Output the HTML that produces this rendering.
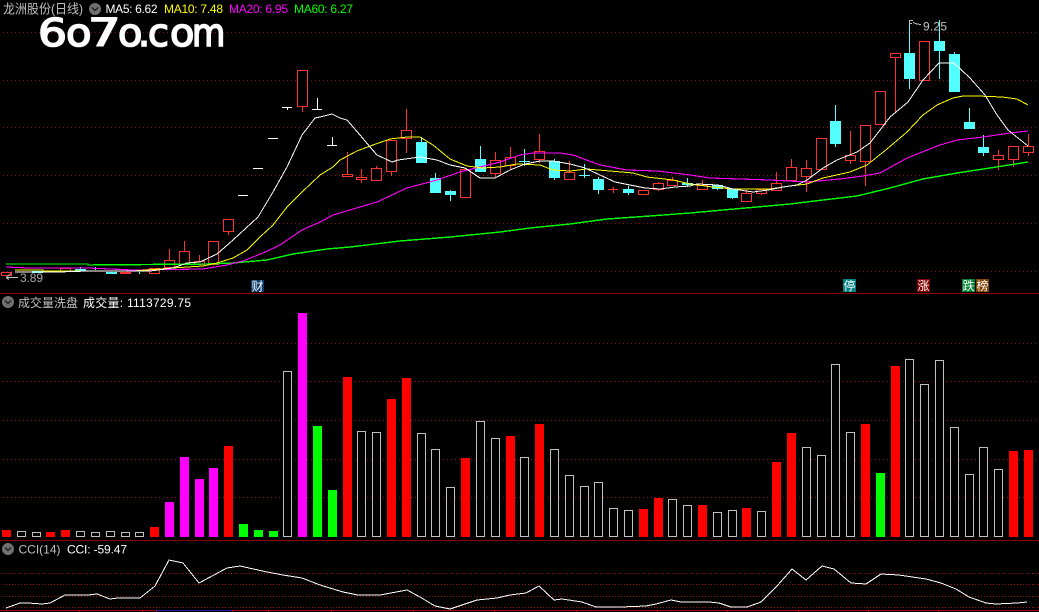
<!DOCTYPE html>
<html><head><meta charset="utf-8"><title>龙洲股份</title>
<style>
html,body{margin:0;padding:0;background:#000;width:1039px;height:612px;overflow:hidden}
svg{display:block;position:absolute;left:0;top:0}
text{font-family:"Liberation Sans","Noto Sans CJK SC",sans-serif;font-size:12px}
.lg{font-family:"DejaVu Sans",sans-serif;font-size:38px;fill:#fff;stroke:#fff;stroke-width:1.6px}
</style></head><body>
<svg width="1039" height="612" viewBox="0 0 1039 612" xmlns="http://www.w3.org/2000/svg">
<rect width="1039" height="612" fill="#000"/>
<!-- grid -->
<g stroke="#8a0f0f" stroke-width="1" stroke-dasharray="1 3" shape-rendering="crispEdges">
<path d="M3 32.5H1039M3 80.5H1039M3 127.5H1039M3 175.5H1039M3 223.5H1039M3 271.5H1039"/>
<path d="M3 343.5H1039M3 381.5H1039M3 420.5H1039M3 459.5H1039M3 497.5H1039"/>
</g>
<g stroke="#a00c0c" stroke-width="1" stroke-dasharray="1 2" shape-rendering="crispEdges">
<path d="M3 573.5H1039M3 584.5H1039M3 596.5H1039M3 607.5H1039"/>
</g>
<!-- dividers -->
<g shape-rendering="crispEdges" fill="none">
<path d="M0 293.5H1039M0 540.5H1039" stroke="#900000"/>
<path d="M0 610.5H1039" stroke="#b00010"/>
<path d="M156 610.5H232" stroke="#2020a0"/>
<path d="M79.5 611V612M142.5 611V612M156.5 611V612M232.5 611V612M268.5 611V612M331.5 611V612M413.5 611V612M494.5 611V612M576.5 611V612M657.5 611V612M727.5 611V612M798.5 611V612M868.5 611V612M938.5 611V612" stroke="#b00010"/>
</g>
<!-- candles -->
<g shape-rendering="crispEdges">
<g stroke="#54ffff" fill="none">
<path d="M80.5 267V271M95.5 267V270M139.5 272V274M435.5 173V193M450.5 190V201M480.5 146V172M524.5 149V166M519 161.5H530M554.5 159V180M584.5 164V178M579 175.5H590M598.5 177V194M628.5 186V195M687.5 178V187M717.5 185V190M732.5 189V199M835.5 105V147M909.5 20V89M939.5 20V79M954.5 52V60M969.5 108V125M983.5 135V156M421.5 137V150"/>
</g>
<g fill="#54ffff">
<rect x="32" y="271" width="11" height="2"/><rect x="75" y="269" width="11" height="2"/><rect x="106" y="272" width="11" height="2"/>
<rect x="416" y="142" width="11" height="21"/><rect x="430" y="178" width="11" height="15"/><rect x="445" y="191" width="11" height="4"/>
<rect x="475" y="159" width="11" height="13"/><rect x="549" y="161" width="11" height="17"/><rect x="593" y="179" width="11" height="11"/>
<rect x="623" y="189" width="11" height="4"/><rect x="682" y="183" width="11" height="2"/><rect x="712" y="185" width="11" height="4"/>
<rect x="727" y="189" width="11" height="9"/><rect x="830" y="121" width="11" height="23"/><rect x="904" y="53" width="11" height="26"/>
<rect x="934" y="41" width="11" height="10"/><rect x="949" y="54" width="11" height="38"/><rect x="964" y="122" width="11" height="7"/>
<rect x="978" y="147" width="11" height="6"/>
</g>
<path d="M238 195.5H248M253 168.5H263M268 138.5H278M282 107.5H292M287.5 107V110M312 109.5H322M317.5 98V109M327 145.5H337M332.5 137V145" stroke="#fff" fill="none"/>
<g stroke="#ff3232" fill="none">
<path d="M169.5 249V260M184.5 241V251M199.5 255V261M228.5 231V235M302.5 106V112M347.5 152V174M361.5 169V183M376.5 166V168M391.5 171V176M406.5 109V153M465.5 197V198M495.5 152V178M510.5 147V170M539.5 134V163M569.5 161V172M613.5 187V193M608 189.5H618M643.5 194V195M658.5 182V191M672.5 177V186M702.5 180V185M746.5 190V193M761.5 193V195M776.5 172V183M791.5 159V167M806.5 160V192M850.5 131V164M865.5 161V186M895.5 57V113M998.5 150V170M1013.5 159V167M1028.5 134V156"/>
</g>
<g stroke="#ff3232" fill="#000">
<rect x="1.5" y="272.5" width="10" height="3"/><rect x="60.5" y="268.5" width="10" height="3"/><rect x="120.5" y="272.5" width="10" height="1"/><rect x="149.5" y="268.5" width="10" height="5"/>
<rect x="164.5" y="260.5" width="10" height="7"/><rect x="179.5" y="251.5" width="10" height="13"/><rect x="194.5" y="261.5" width="10" height="3"/>
<rect x="208.5" y="241.5" width="10" height="23"/><rect x="223.5" y="219.5" width="10" height="12"/><rect x="297.5" y="70.5" width="10" height="36"/>
<rect x="342.5" y="174.5" width="10" height="2"/><rect x="356.5" y="177.5" width="10" height="2"/><rect x="371.5" y="168.5" width="10" height="12"/>
<rect x="386.5" y="140.5" width="10" height="31"/><rect x="401.5" y="130.5" width="10" height="8"/><rect x="460.5" y="169.5" width="10" height="28"/>
<rect x="490.5" y="160.5" width="10" height="13"/><rect x="505.5" y="157.5" width="10" height="8"/><rect x="534.5" y="151.5" width="10" height="8"/>
<rect x="564.5" y="172.5" width="10" height="7"/><rect x="638.5" y="190.5" width="10" height="4"/><rect x="653.5" y="183.5" width="10" height="6"/>
<rect x="667.5" y="180.5" width="10" height="5"/><rect x="697.5" y="185.5" width="10" height="4"/><rect x="741.5" y="193.5" width="10" height="8"/>
<rect x="756.5" y="189.5" width="10" height="4"/><rect x="771.5" y="183.5" width="10" height="7"/><rect x="786.5" y="167.5" width="10" height="13"/>
<rect x="801.5" y="168.5" width="10" height="8"/><rect x="816.5" y="138.5" width="10" height="31"/><rect x="845.5" y="155.5" width="10" height="5"/>
<rect x="860.5" y="125.5" width="10" height="36"/><rect x="875.5" y="91.5" width="10" height="33"/><rect x="890.5" y="53.5" width="10" height="4"/>
<rect x="919.5" y="41.5" width="10" height="39"/><rect x="993.5" y="155.5" width="10" height="4"/><rect x="1008.5" y="146.5" width="10" height="13"/>
<rect x="1023.5" y="146.5" width="10" height="6"/>
</g>
</g>
<!-- moving averages -->
<g fill="none" shape-rendering="crispEdges">
<polyline stroke="#00ff00" stroke-width="1.4" points="6,264 88,264 88,265 207,264 233,263 267,260 293,254 327,249 350,247 400,241 450,237 500,232 530,228 570,224 607,219 650,216 690,213 723,210 757,207 790,204 823,200 857,196 890,188 923,179 957,173 990,168 1028,162"/>
<polyline stroke="#ff00ff" stroke-width="1.1" points="6,267 28,268 88,268 133,270 203,269 227,265 243,261 263,253 280,245 302,230 320,222 333,215 350,210 360,207 377,202 407,188 437,180 460,172 480,167 500,162 520,155 533,153 560,153 573,155 600,165 627,170 657,171 690,175 710,178 740,179 770,180 807,182 840,179 863,176 880,173 907,158 940,145 957,140 983,137 1010,133 1028,131"/>
<polyline stroke="#ffff00" stroke-width="1" points="15,270 43,270 43,271 133,271 173,268 187,267 203,266 217,263 233,258 247,250 260,237 273,225 287,207 302,192 320,175 333,167 340,160 357,151 373,145 390,139 407,137 420,137 433,145 450,159 467,166 483,168 500,167 517,164 540,165 553,170 570,171 587,169 610,171 633,173 647,177 673,180 690,184 713,187 733,189 770,189 790,186 807,184 823,178 850,172 867,165 887,149 907,132 923,115 937,105 953,98 963,96 977,96 1002,97 1017,99 1028,105"/>
<polyline stroke="#ffffff" stroke-width="1" points="15,272 58,272 88,271 133,271 150,271 173,268 187,263 200,262 217,254 233,240 258,217 273,192 287,167 295,150 302,135 315,118 320,117 332,114 340,118 347,120 360,135 370,147 377,155 392,162 398,160 420,157 437,160 450,165 465,168 480,178 495,178 510,170 525,164 540,161 553,161 570,164 585,168 600,175 615,182 630,185 645,188 660,189 675,187 690,186 697,184 718,185 733,189 753,192 768,190 783,187 797,185 807,180 823,168 837,160 857,152 870,143 890,117 908,102 923,80 939,63 954,63 970,78 985,95 997,115 1008,130 1028,146"/>
</g>
<!-- volume bars -->
<g fill="#ff0000" shape-rendering="crispEdges">
<rect x="2" y="530" width="9" height="7"/><rect x="46" y="532" width="9" height="5"/><rect x="61" y="530" width="9" height="7"/><rect x="150" y="527" width="9" height="10"/><rect x="224" y="446" width="9" height="91"/>
<rect x="343" y="377" width="9" height="160"/><rect x="387" y="399" width="9" height="138"/><rect x="402" y="378" width="9" height="159"/><rect x="461" y="458" width="9" height="79"/><rect x="506" y="436" width="9" height="101"/>
<rect x="535" y="424" width="9" height="113"/><rect x="639" y="509" width="9" height="28"/><rect x="654" y="498" width="9" height="39"/><rect x="698" y="505" width="9" height="32"/><rect x="742" y="508" width="9" height="29"/>
<rect x="772" y="462" width="9" height="75"/><rect x="787" y="433" width="9" height="104"/><rect x="861" y="424" width="9" height="113"/><rect x="891" y="366" width="9" height="171"/><rect x="1009" y="451" width="9" height="86"/><rect x="1024" y="450" width="9" height="87"/>
</g>
<g fill="#ff00ff" shape-rendering="crispEdges">
<rect x="165" y="502" width="9" height="35"/><rect x="180" y="457" width="9" height="80"/><rect x="195" y="479" width="9" height="58"/><rect x="209" y="468" width="9" height="69"/><rect x="298" y="313" width="9" height="224"/>
</g>
<g fill="#00ff00" shape-rendering="crispEdges">
<rect x="239" y="524" width="9" height="13"/><rect x="254" y="530" width="9" height="7"/><rect x="269" y="531" width="9" height="6"/><rect x="313" y="426" width="9" height="111"/><rect x="328" y="490" width="9" height="47"/><rect x="876" y="473" width="9" height="64"/>
</g>
<g fill="#000" stroke="#c0c0c0" shape-rendering="crispEdges">
<rect x="17.5" y="531.5" width="8" height="5"/><rect x="32.5" y="532.5" width="8" height="4"/><rect x="76.5" y="531.5" width="8" height="5"/><rect x="91.5" y="532.5" width="8" height="4"/><rect x="106.5" y="531.5" width="8" height="5"/><rect x="121.5" y="532.5" width="8" height="4"/><rect x="135.5" y="532.5" width="8" height="4"/>
<rect x="283.5" y="371.5" width="8" height="165"/><rect x="357.5" y="431.5" width="8" height="105"/><rect x="372.5" y="432.5" width="8" height="104"/><rect x="417.5" y="433.5" width="8" height="103"/><rect x="431.5" y="449.5" width="8" height="87"/><rect x="446.5" y="487.5" width="8" height="49"/>
<rect x="476.5" y="421.5" width="8" height="115"/><rect x="491.5" y="438.5" width="8" height="98"/><rect x="520.5" y="457.5" width="8" height="79"/><rect x="550.5" y="449.5" width="8" height="87"/><rect x="565.5" y="475.5" width="8" height="61"/><rect x="580.5" y="486.5" width="8" height="50"/>
<rect x="594.5" y="482.5" width="8" height="54"/><rect x="609.5" y="508.5" width="8" height="28"/><rect x="624.5" y="510.5" width="8" height="26"/><rect x="668.5" y="499.5" width="8" height="37"/><rect x="683.5" y="505.5" width="8" height="31"/><rect x="713.5" y="512.5" width="8" height="24"/>
<rect x="728.5" y="510.5" width="8" height="26"/><rect x="757.5" y="511.5" width="8" height="25"/><rect x="802.5" y="447.5" width="8" height="89"/><rect x="817.5" y="455.5" width="8" height="81"/><rect x="831.5" y="364.5" width="8" height="172"/><rect x="846.5" y="432.5" width="8" height="104"/>
<rect x="905.5" y="359.5" width="8" height="177"/><rect x="920.5" y="384.5" width="8" height="152"/><rect x="935.5" y="360.5" width="8" height="176"/><rect x="950.5" y="427.5" width="8" height="109"/><rect x="965.5" y="474.5" width="8" height="62"/><rect x="979.5" y="447.5" width="8" height="89"/><rect x="994.5" y="469.5" width="8" height="67"/>
</g>
<!-- CCI -->
<polyline fill="none" stroke="#fff" stroke-width="1" shape-rendering="crispEdges" points="6,608 20,603 28,603 42,604 50,603 65,595 88,595 97,594 110,599 118,598 140,598 155,586 169,560 183,563 199,583 227,568 240,566 267,572 283,575 302,578 320,585 343,592 358,595 380,595 407,590 420,597 435,606 450,609 477,600 497,598 510,595 526,593 539,586 554,600 562,599 582,602 596,607 621,607 646,606 656,604 671,600 681,602 709,602 719,603 731,607 747,607 761,602 777,586 792,569 806,580 822,566 834,569 851,583 866,584 881,574 899,575 926,579 941,583 956,589 969,597 986,603 996,604 1017,603 1027,602"/>
<!-- logo -->
<text class="lg" transform="translate(38,46) scale(1.2,1)">6</text>
<text class="lg" transform="translate(66,46) scale(1.1,1)">o</text>
<text class="lg" transform="translate(88,46) scale(1.35,1)">7</text>
<text class="lg" transform="translate(118,46) scale(1.05,1)">o</text>
<text class="lg" x="138" y="46">.</text>
<text class="lg" x="148" y="46">c</text>
<text class="lg" transform="translate(170,46) scale(1.05,1)">o</text>
<text class="lg" transform="translate(192,46) scale(.9,1)">m</text>
<!-- headers -->
<text x="3" y="13.500" fill="#c0c0c0" textLength="80" lengthAdjust="spacingAndGlyphs" style="font-size:13px">龙洲股份(日线)</text>
<circle cx="95" cy="9" r="6" fill="#707070"/>
<path d="M92 7.500L95 10.500L98 7.500" fill="none" stroke="#1c1c1c" stroke-width="1.300"/>
<text x="105.500" y="13" fill="#fff" textLength="52">MA5: 6.62</text>
<text x="164" y="13" fill="#ffff00" textLength="59">MA10: 7.48</text>
<text x="229" y="13" fill="#ff00ff" textLength="59">MA20: 6.95</text>
<text x="294" y="13" fill="#00ff00" textLength="59">MA60: 6.27</text>
<circle cx="8" cy="302" r="6" fill="#707070"/>
<path d="M5 300.500L8 303.500L11 300.500" fill="none" stroke="#1c1c1c" stroke-width="1.300"/>
<text x="18" y="307" fill="#c0c0c0" textLength="60" lengthAdjust="spacingAndGlyphs">成交量洗盘</text>
<text x="83" y="307" fill="#fff" textLength="108">成交量: 1113729.75</text>
<circle cx="8" cy="549" r="6" fill="#707070"/>
<path d="M5 547.500L8 550.500L11 547.500" fill="none" stroke="#1c1c1c" stroke-width="1.300"/>
<text x="18.500" y="553.500" fill="#c0c0c0" textLength="42">CCI(14)</text>
<text x="67" y="553.500" fill="#fff" textLength="60">CCI: -59.47</text>
<!-- price labels -->
<path d="M909.500 20V25M909.500 20.500H913M909.500 23.500H912M913 22.500L917 24L921 24.500" fill="none" stroke="#c0c0c0" shape-rendering="crispEdges"/>
<text x="923" y="30.500" fill="#c0c0c0" textLength="24">9.25</text>
<path d="M6 277.500H18M6 277.500L11 273.500M6 277.500L9 279.500" fill="none" stroke="#c0c0c0" shape-rendering="crispEdges"/>
<text x="20" y="282" fill="#a8a8a8" textLength="23">3.89</text>
<!-- event markers -->
<g shape-rendering="crispEdges">
<rect x="251" y="280" width="13" height="12" fill="#0a3c6c"/>
<rect x="843" y="279" width="13" height="13" fill="#008080"/>
<rect x="917" y="279" width="13" height="13" fill="#800000"/>
<rect x="962" y="279" width="13" height="13" fill="#008030"/>
<rect x="976" y="279" width="13" height="13" fill="#804000"/>
</g>
<g fill="#fff" style="font-size:12px">
<text x="251.500" y="290.500">财</text>
<text x="843.500" y="290">停</text>
<text x="917.500" y="290">涨</text>
<text x="962.500" y="290">跌</text>
<text x="976.500" y="290">榜</text>
</g>
</svg>
</body></html>
